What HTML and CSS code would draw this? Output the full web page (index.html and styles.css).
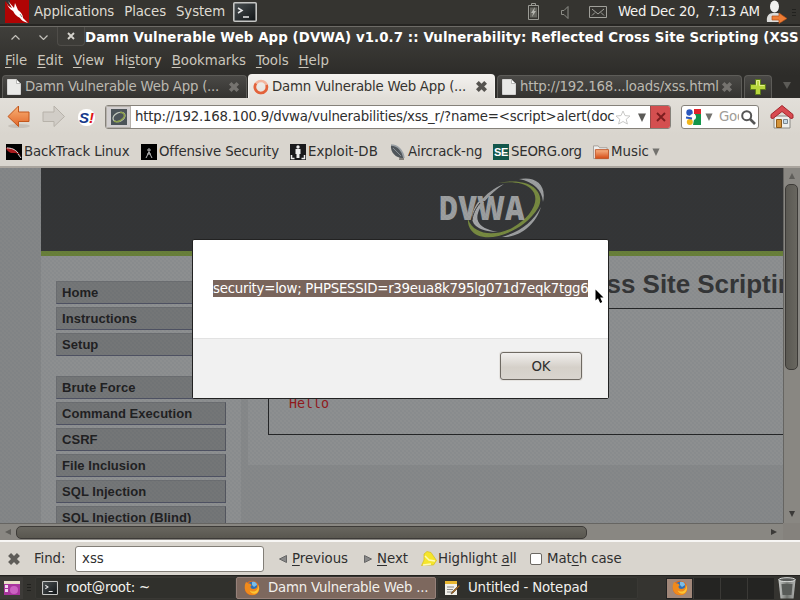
FILE: index.html
```
<!DOCTYPE html>
<html lang="en">
<head>
<meta charset="utf-8">
<title>Desktop</title>
<link rel="stylesheet" href="styles.css">
</head>
<body>
<svg class="defs" width="0" height="0">
  <defs>
    <linearGradient id="org" x1="0" y1="0" x2="0" y2="1"><stop offset="0" stop-color="#f9b377"/><stop offset="1" stop-color="#e2672a"/></linearGradient>
    <linearGradient id="screen" x1="0" y1="0" x2="1" y2="1"><stop offset="0" stop-color="#4c5254"/><stop offset="1" stop-color="#0f1315"/></linearGradient>
    <linearGradient id="fold" x1="0" y1="0" x2="0" y2="1"><stop offset="0" stop-color="#f7b384"/><stop offset="1" stop-color="#d44a14"/></linearGradient>
    <linearGradient id="steel" x1="0" y1="0" x2="1" y2="0"><stop offset="0" stop-color="#c8cac8"/><stop offset=".5" stop-color="#70736f"/><stop offset="1" stop-color="#b4b6b4"/></linearGradient>
    <symbol id="page" viewBox="0 0 14 16"><path d="M.5.5h9l4 4v11H.5z" fill="#e9e9e7" stroke="#fff" stroke-opacity=".6"/><path d="M9.5.5v4h4z" fill="#fff" stroke="#a8a8a6" stroke-width=".8"/></symbol>
    <symbol id="cross" viewBox="0 0 12 12"><path d="M2.2 2.2l7.6 7.6M9.8 2.2L2.2 9.8" stroke="currentColor" stroke-width="3.600"/></symbol>
    <symbol id="term" viewBox="0 0 24 20"><rect x=".8" y=".8" width="22.4" height="18.4" rx="1" fill="url(#screen)" stroke="#c5c6c4" stroke-width="1.6"/><path d="M5 6l4 2.5L5 11M10 15h6" fill="none" stroke="#e8e8e8" stroke-width="1.5"/></symbol>
    <symbol id="fox" viewBox="0 0 16 16"><circle cx="8" cy="8" r="7.3" fill="#e86a14"/><circle cx="8.4" cy="6.6" r="5.2" fill="#2f6fb5"/><path d="M8 2c3-1 5 1 5 3l-3 2-2-2z" fill="#79bde8"/><path d="M1 4.5L2 2l2.4 1.6C6 3.4 7 4 7.600 5.200L6.500 6.500c.2 2.500 2.500 3 5 2.100 1.500-.9 2-2.400 1.800-4.600C16 7 15.800 11 13 13.500c-4 3-9.500 1.500-11.400-2.500C.7 9 .6 6.500 1 4.500z" fill="#f08a1c"/><path d="M12 13.500c3-2 3.600-5.500 2.200-8.500.3 3-.7 5-2.700 6-2 1-4.500.6-5.800-.8.4 2.300 3.300 4 6.300 3.300z" fill="#fcc534"/></symbol>
  </defs>
</svg>

<header class="panel">
  <svg class="bt-logo" width="24" height="23" viewBox="0 0 24 23"><rect width="24" height="23" fill="#b00404"/><path d="M0 0h5v6L0 1z" fill="#333"/><path d="M1 1c1 4 3 6 6 7L3 1l6 7 1-5 3 7c3 2 5 5 5 8l5 5c-4-1-7-3-8-5-3-2-5-3-7-7C4 9 2 5 1 1z" fill="#fff"/><path d="M15 14l2 3" stroke="#888"/></svg>
  <nav class="panel-menu"><span>Applications</span><span>Places</span><span>System</span></nav>
  <svg class="panel-term" width="24" height="20"><use href="#term"/></svg>
  <svg class="battery" width="11" height="17" viewBox="0 0 11 17"><path d="M3.500 2.500v-2h4v2M.5 2.500h10v14H.5z" fill="none" stroke="#9a9a94"/><path d="M2 4.500h7v10H2z" fill="#65655f"/><path d="M7 4L3 10h2l-1 4 4-6H6z" fill="#b5b5af"/></svg>
  <svg class="sound" width="8" height="13" viewBox="0 0 8 13"><path d="M.5 4.500h2.500l4-4v12l-4-4H.5z" fill="none" stroke="#8d8d87"/></svg>
  <svg class="mail" width="18" height="12" viewBox="0 0 18 12"><path d="M.5.5h17v11H.5zM3 3l6 5 6-5M3 9.500l3-3M15 9.500l-3-3" fill="none" stroke="#a0a09a"/></svg>
  <span class="clock">Wed Dec 20,&nbsp; 7:13 AM</span>
  <svg class="user" width="22" height="24" viewBox="0 0 22 24"><path d="M1 22c-1-6 2-9 6-9h4c4 0 6 3 5 9z" fill="#dcdcda"/><ellipse cx="8.500" cy="6.500" rx="4.500" ry="6" fill="#f0f0ee"/><path d="M6 16h7v-3l8 5.500-8 5V20H6z" fill="#ee7d35" stroke="#b24c12" stroke-width=".7"/></svg>
  <svg class="grip" width="4" height="8" viewBox="0 0 4 8"><path d="M0 .5h4M0 3.500h4M0 6.500h4" stroke="#22221f"/></svg>
</header>

<div class="chrome">
  <div class="titlebar">
    <svg class="tb-up" width="9" height="5" viewBox="0 0 9 5"><path d="M.5 4.500l4-4 4 4" fill="none" stroke="#c3c1bb" stroke-width="1.200"/></svg>
    <svg class="tb-down" width="9" height="5" viewBox="0 0 9 5"><path d="M.5.5l4 4 4-4" fill="none" stroke="#c3c1bb" stroke-width="1.200"/></svg>
    <div class="tb-close"><svg width="8" height="8" viewBox="0 0 8 8"><path d="M1 1l6 6M7 1L1 7" stroke="#d5d3cd" stroke-width="1.900"/></svg></div>
    <h1>Damn Vulnerable Web App (DVWA) v1.0.7 :: Vulnerability: Reflected Cross Site Scripting (XSS</h1>
  </div>
  <nav class="menubar"><span><u>F</u>ile</span><span><u>E</u>dit</span><span><u>V</u>iew</span><span>Hi<u>s</u>tory</span><span><u>B</u>ookmarks</span><span><u>T</u>ools</span><span><u>H</u>elp</span></nav>
  <div class="tabs">
    <div class="tab tab-first"><svg width="14" height="16"><use href="#page"/></svg><span>Damn Vulnerable Web App (...</span><svg class="x" width="12" height="12"><use href="#cross"/></svg></div>
    <div class="tab tab-on"><svg width="16" height="16" viewBox="0 0 16 16"><circle cx="8" cy="8" r="6" fill="none" stroke="#f3b49c" stroke-width="2.600"/><path d="M3 4.500A6 6 0 1 0 13.500 6" fill="none" stroke="#e2623a" stroke-width="2.600"/></svg><span>Damn Vulnerable Web App (...</span><svg class="x" width="13" height="13"><use href="#cross"/></svg></div>
    <div class="tab tab-last"><svg width="14" height="16"><use href="#page"/></svg><span>http://192.168...loads/xss.html</span><svg class="x" width="12" height="12"><use href="#cross"/></svg></div>
    <div class="tab tab-new"><svg width="16" height="16" viewBox="0 0 16 16"><path d="M5.500.5h5v5h5v5h-5v5h-5v-5h-5v-5h5z" fill="#b9d63d" stroke="#5d7a1a"/><path d="M6.500 6.500v-5h3v5h5" fill="none" stroke="#e5f08c"/></svg></div>
    <svg class="tab-list" width="8" height="7" viewBox="0 0 8 7"><path d="M0 0h8L4 7z" fill="#5c5b57"/></svg>
  </div>
</div>

<div class="toolbar">
  <svg class="back" width="24" height="24" viewBox="0 0 24 24"><ellipse cx="12" cy="21" rx="11" ry="2" fill="#c6c1ba"/><path d="M1 11.500L11.500 1v6H22v9.500H11.500v5z" fill="url(#org)" stroke="#c2561c"/></svg>
  <svg class="fwd" width="24" height="24" viewBox="0 0 24 24"><path d="M22.500 11.500L12 1v6H1v9.500h11v5z" fill="#d1cdc7" stroke="#b7b2aa"/></svg>
  <div class="noscript"><i>S</i><b>!</b></div>
  <div class="urlbar">
    <div class="identity"><svg width="16" height="16" viewBox="0 0 16 16"><rect width="16" height="16" fill="#4c5459"/><ellipse cx="8" cy="8" rx="6.300" ry="4.300" fill="none" stroke="#c3c9be" stroke-width="1.200" transform="rotate(-25 8 8)"/><path d="M9 3.500c4-.5 6 3 3 6s-6 4-9 2.500" fill="none" stroke="#8ea24c" stroke-width="1.500"/></svg></div>
    <span class="url">http://192.168.100.9/dvwa/vulnerabilities/xss_r/?name=&lt;script&gt;alert(doc</span>
    <svg class="star" width="16" height="15" viewBox="0 0 16 15"><path d="M8 1l2 4.600 5 .4-3.800 3.300L12.400 14 8 11.500 3.600 14l1.200-4.700L1 6l5-.4z" fill="#fff" stroke="#c9c9c7"/></svg>
    <svg class="drop" width="8" height="9" viewBox="0 0 8 9"><path d="M0 .5h8L4 9z" fill="#5c5b58"/></svg>
    <div class="stop"><svg width="10" height="10" viewBox="0 0 10 10"><path d="M1 1l8 8M9 1L1 9" stroke="#7c1d1f" stroke-width="1.900"/></svg></div>
  </div>
  <div class="search">
    <svg width="16" height="16" viewBox="0 0 16 16"><path d="M9 0h7v5H9z" fill="#e0242c"/><path d="M10 5h6v11H8z" fill="#13964b"/><circle cx="4.500" cy="3.500" r="3.200" fill="#2a57bd"/><circle cx="8" cy="8" r="3" fill="#fff"/><circle cx="4.800" cy="13" r="3" fill="#f2b61b"/><path d="M1 8.500l6 1" stroke="#2a57bd" stroke-width="1.800"/></svg>
    <svg class="drop" width="8" height="8" viewBox="0 0 8 9"><path d="M0 .5h8L4 9z" fill="#73726e"/></svg>
    <span>Goo</span>
    <svg class="lens" width="15" height="15" viewBox="0 0 15 15"><circle cx="5.700" cy="5.700" r="4.500" fill="none" stroke="#555" stroke-width="2"/><path d="M9 9l5 5" stroke="#555" stroke-width="2.600"/></svg>
  </div>
  <svg class="home" width="24" height="24" viewBox="0 0 24 24"><path d="M4 11h16v12H4z" fill="#efefec" stroke="#8a8a86"/><path d="M6.500 14.500h5v8h-5z" fill="#d4943a" stroke="#8f5a18"/><path d="M13.500 14.500h4v4h-4z" fill="#c6d9e6" stroke="#7a8790"/><path d="M1 13V9.500L12 .5l11 9V13l-2 .5-9-7-9 7z" fill="#d84a50" stroke="#a3262d"/></svg>
</div>

<nav class="bookmarks">
  <span class="bm1"><svg width="16" height="16" viewBox="0 0 16 16"><path d="M0 0h16v16H0z"/><path d="M0 4c5-1 11 2 15 8-4-4-8-3-10-3C3 8 1 7 0 4z" fill="#a81b1e"/><path d="M1 4c4 0 8 1 11 5M12 10l3 4" stroke="#ddd" fill="none"/></svg>BackTrack Linux</span>
  <span class="bm2"><svg width="16" height="16" viewBox="0 0 16 16"><path d="M0 0h16v16H0z"/><path d="M8 4v5M6 6h4M8 8l-3 6M8 8l3 6M6 10h4" stroke="#bbb" fill="none"/></svg>Offensive Security</span>
  <span class="bm3"><svg width="16" height="16" viewBox="0 0 16 16"><path d="M0 0h16v16H0z" fill="#1a1a1c"/><circle cx="8" cy="3" r="1.700" fill="#eee"/><path d="M5.500 5h5v5h-1v4h-3v-4h-1z" fill="#eee"/><path d="M1.500 11v3.500h3M14.500 11v3.500h-3" stroke="#eee" fill="none" stroke-width="1.500"/></svg>Exploit-DB</span>
  <span class="bm4"><svg width="16" height="16" viewBox="0 0 16 16"><path d="M10 9l4 3v4H9z" fill="#85817b"/><path d="M1 1c7 0 12 6 13 13C7 15 0 9 1 1z" fill="#50565b"/><path d="M1 1c7 0 12 6 13 13" fill="none" stroke="#9aa0a5" stroke-width="1.500"/><path d="M3 4l8 8" stroke="#888e93"/></svg>Aircrack-ng</span>
  <span class="bm5"><b class="se">SE</b>SEORG.org</span>
  <span class="bm6"><svg width="16" height="16" viewBox="0 0 17 16"><path d="M.5 15V1.500h5l1.500 2h8V15z" fill="#eee" stroke="#a29d97"/><path d="M2.500 5.500h14v9.500h-14z" fill="url(#fold)" stroke="#c0582a"/></svg>Music<svg class="mdrop" width="8" height="8" viewBox="0 0 8 9"><path d="M0 .5h8L4 9z" fill="#73726e"/></svg></span>
</nav>

<main class="content">
  <div class="viewport">
    <div class="site">
      <div class="site-head">
        <svg class="dvwa" width="112" height="64" viewBox="0 0 112 64">
          <path d="M66 8C56 12 48 18 43 25h4C52 19 58 13 66 8z" fill="#9c9e9f"/>
          <path d="M60 7C95 0 108 18 100 32 88 52 62 63 46 61 34 60 29 50 30 43c6 17 28 17 44 9C95 40 104 22 92 12 86 7 75 5 60 7z" fill="#77893f"/>
          <path d="M103 31c-5 17-21 31-39 30 18-5 31-15 39-30zM81 3c16-3 28 5 24 23C104 14 96 6 81 3z" fill="#9c9e9f"/>
          <path d="M40 26c-12 18-6 29 20 30-22-4-26-14-14-30z" fill="#a4a6a7"/>
          <text class="dvwa-text" x=".5" y="43.500" textLength="86" lengthAdjust="spacingAndGlyphs">DVWA</text>
          <path d="M42 27c-5 6-7 11-8 17" fill="none" stroke="#343536"/>
        </svg>
      </div>
      <div class="site-body">
        <ul class="side">
          <li>Home</li><li>Instructions</li><li>Setup</li>
          <li class="gap">Brute Force</li><li>Command Execution</li><li>CSRF</li><li>File Inclusion</li><li>SQL Injection</li><li>SQL Injection (Blind)</li>
        </ul>
        <section class="main">
          <h2>Vulnerability: Reflected Cross Site Scripting (XSS)</h2>
          <div class="box"><pre>Hello</pre></div>
        </section>
      </div>
    </div>
  </div>
  <div class="vscroll"><svg width="6" height="6" viewBox="0 0 6 6"><path d="M0 6h6L3 0z" fill="#5f5e5a"/></svg><div class="vthumb"></div><svg class="vs-down" width="6" height="6" viewBox="0 0 6 6"><path d="M0 0h6L3 6z" fill="#3b3a38"/></svg></div>
  <div class="hscroll"><svg width="6" height="6" viewBox="0 0 6 6"><path d="M6 0v6L0 3z" fill="#5f5e5a"/></svg><div class="hthumb"></div><svg class="hs-right" width="6" height="6" viewBox="0 0 6 6"><path d="M0 0v6l6-3z" fill="#3b3a38"/></svg></div>
  <div class="corner"></div>
  <div class="dialog">
    <div class="msg"><span>security=low; PHPSESSID=r39eua8k795lg071d7eqk7tgg6</span></div>
    <div class="actions"><button>OK</button></div>
  </div>
  <svg class="cursor" width="10" height="17" viewBox="0 0 10 17"><path d="M.5.5v11l2.500-2.200 2.200 4.700 2-1-2-4.500h3.300z" fill="#000"/></svg>
</main>

<div class="findbar">
  <svg class="fx" width="14" height="14"><use href="#cross"/></svg>
  <label>Find:</label>
  <div class="find-in">xss</div>
  <svg class="prev-i" width="8" height="8" viewBox="0 0 8 8"><path d="M7.500.5v7L.5 4z" fill="#888" stroke="#666"/></svg>
  <span class="prev"><u>P</u>revious</span>
  <svg class="next-i" width="8" height="8" viewBox="0 0 8 8"><path d="M.5.5v7l7-3.500z" fill="#888" stroke="#666"/></svg>
  <span class="next"><u>N</u>ext</span>
  <svg class="hl-i" width="16" height="16" viewBox="0 0 16 16"><path d="M3 3l3-2.500 4 1 5.500 8-3 4.500H3l-2.500.5L3 9z" fill="#f5e52c" stroke="#d5bd1c" stroke-width=".7"/><path d="M4 5l4 4 6 1M2 14l8-1" stroke="#fffbb0" fill="none" stroke-width="1.500"/></svg>
  <span class="hl">Highlight <u>a</u>ll</span>
  <div class="check"></div>
  <span class="mc">Mat<u>c</u>h case</span>
</div>

<footer class="taskbar">
  <div class="show"><svg width="16" height="14" viewBox="0 0 16 14"><path d="M0 0h16v14H0z" fill="#a9359e"/><path d="M0 0h16v3H0z" fill="#e8dfc9"/><path d="M1 4h3v3H1zM1 8h3v3H1z" fill="#f0d8ee"/><circle cx="10" cy="9" r="4" fill="#cc62c2"/></svg></div>
  <svg class="grip2" width="4" height="8" viewBox="0 0 4 8"><path d="M0 .5h4M0 3.500h4M0 6.500h4" stroke="#20201d"/></svg>
  <div class="task t1"><svg width="16" height="14" viewBox="0 0 24 20" preserveAspectRatio="none"><use href="#term" width="24" height="20"/></svg><span>root@root: ~</span></div>
  <div class="task t2"><svg width="16" height="16"><use href="#fox"/></svg><span>Damn Vulnerable Web ...</span></div>
  <div class="task t3"><svg width="16" height="16" viewBox="0 0 16 16"><path d="M1 2h12v13H1z" fill="#f1f0ea"/><path d="M1 1h12v3H1z" fill="#e8b731"/><path d="M3 7h7M3 9.500h6M3 12h5" stroke="#888"/><path d="M15 5l-7 7-1 2 2-1 7-7z" fill="#a56a25" stroke="#442a10" stroke-width=".5"/></svg><span>Untitled - Notepad</span></div>
  <div class="pager"><div class="desk on"><svg width="16" height="16"><use href="#fox"/></svg></div><div class="desk"></div><div class="desk"></div><div class="desk"></div></div>
  <svg class="trash" width="18" height="22" viewBox="0 0 18 22"><path d="M.5 3h17l-2 18.500h-13z" fill="url(#steel)"/><path d="M3.500 7h11l-1 11h-9z" fill="#585b58"/><ellipse cx="9" cy="2.700" rx="8.300" ry="2" fill="#5a5c5a" stroke="#dcdedc"/></svg>
</footer>
</body>
</html>
```

FILE: styles.css
```
* { box-sizing: border-box; }
body {
  margin: 0; width: 800px; height: 600px; overflow: hidden;
  font-family: "DejaVu Sans", sans-serif; font-size: 13.33px; line-height: 16px;
  color: #2f2f2f; background: #3c3b37;
}
span, h1, h2, label { white-space: nowrap; }
svg { display: block; flex: none; }
.defs { position: absolute; }
u { text-underline-offset: 2px; text-decoration-thickness: 1px; }

.panel { height: 26px; display: flex; align-items: flex-start; background: #353430; border-bottom: 2px solid #262522; color: #dfdbd2; }
.bt-logo { margin-left: 5px; }
.panel-menu { display: flex; margin: 4px 0 0 5px; letter-spacing: -.1px; }
.panel-menu span { margin-right: 10px; }
.panel-term { margin: 2px 0 0 -2px; }
.battery { margin: 3px 0 0 auto; }
.sound { margin: 6px 0 0 22px; }
.mail { margin: 6px 0 0 20px; }
.clock { margin: 4px 0 0 11px; width: 142px; color: #f4f2ee; letter-spacing: -.3px; }
.user { margin-left: 6px; }
.grip { margin: 9px 4px 0 4px; }

.chrome { height: 72px; background: linear-gradient(#403f3b, #2d2c29 48px); border-top: 1px solid #6d6b66; }
.titlebar { height: 21px; display: flex; align-items: center; overflow: hidden; }
.tb-up { margin-left: 11px; }
.tb-down { margin-left: 19px; }
.tb-close { margin: 0 0 2px 9px; width: 28px; height: 19px; display: flex; align-items: center; justify-content: center; border: 1px solid #4f4d49; border-top: 0; border-radius: 0 0 4px 4px; background: #3d3c38; }
.titlebar h1 { margin: 0; font-size: 13.33px; font-weight: bold; color: #fff; line-height: 16px; letter-spacing: .095px; }
.menubar { height: 26px; display: flex; align-items: center; padding-left: 5px; color: #cbc7bd; letter-spacing: -.03px; }
.menubar span { margin-right: 10px; }
.tabs { height: 24px; display: flex; align-items: flex-end; }
.tab { height: 23px; display: flex; align-items: center; border-radius: 4px 4px 0 0; border: 1px solid #5d5c58; border-bottom: 0; background: linear-gradient(#4a4946, #343330); color: #bcb9b1; letter-spacing: -.24px; }
.tab span { flex: 1; }
.tab .x { color: #75736f; }
.tab-first { margin-left: 2px; width: 245px; padding: 0 6px 0 4px; }
.tab-first span { margin-left: 4px; }
.tab-on { margin-left: 1px; width: 247px; height: 24px; padding: 0 6px 0 4px; background: linear-gradient(#f3f1ee, #e2dfd9); border-color: #f4f2ee; color: #36342f; }
.tab-on span { margin-left: 3px; }
.tab-on .x { color: #55534f; }
.tab-last { margin-left: 2px; width: 245px; padding: 0 8px 0 4px; letter-spacing: -.2px; }
.tab-last span { margin-left: 4px; }
.tab-new { margin-left: 2px; width: 28px; justify-content: center; }
.tab-list { margin: 0 0 9px 11px; }

.toolbar { height: 37px; padding-top: 1px; display: flex; align-items: center; background: linear-gradient(#e2dfd9, #d9d5ce); }
.back { margin-left: 7px; }
.fwd { margin-left: 11px; }
.noscript { margin-left: 12px; width: 17px; height: 17px; border-radius: 8px; background: #fff; font: bold 15px/17px "Liberation Sans", sans-serif; color: #173a8c; display: flex; justify-content: center; }
.noscript b { color: #e01414; font-style: italic; }
.urlbar { margin-left: 10px; width: 566px; height: 24px; display: flex; align-items: center; background: #fff; border: 1px solid #85817a; border-radius: 3px; overflow: hidden; }
.identity { width: 25px; height: 22px; display: flex; align-items: center; justify-content: center; background: #d2cfd0; border: 1px solid #b5b1ab; }
.url { width: 478px; margin-left: 4px; letter-spacing: -.22px; }
.star { margin-left: 2px; }
.urlbar .drop { margin-left: 7px; }
.stop { margin-left: auto; align-self: stretch; width: 20px; display: flex; align-items: center; justify-content: center; background: #d44f50; border-left: 1px solid #9c4a49; }
.search { margin-left: 10px; width: 78px; height: 24px; display: flex; align-items: center; background: #fff; border: 1px solid #85817a; border-radius: 3px; padding-left: 3px; }
.search .drop { margin-left: 4px; }
.search span { margin-left: 6px; width: 20px; overflow: hidden; color: #a09d98; letter-spacing: -.3px; }
.lens { margin-left: 2px; }
.home { margin-left: 11px; }

.bookmarks { height: 33px; display: flex; align-items: center; background: #d9d5ce; border-bottom: 2px solid #aaa59e; padding: 2px 0 0 6px; letter-spacing: -.13px; }
.bookmarks span { display: flex; align-items: center; gap: 2px; }
.bm1 { width: 135px; }
.bm2 { width: 149px; }
.bm3 { width: 100px; letter-spacing: 0; }
.bm4 { width: 103px; }
.bm5 { width: 100px; letter-spacing: -.25px; }
.bm6 { letter-spacing: 0; }
.se { width: 16px; height: 16px; background: #12564a; color: #fff; font: bold 11px/17px "Liberation Sans", sans-serif; text-align: center; }
.mdrop { margin-left: 1px; }

.content { position: relative; height: 372px; display: grid; grid-template: 355px 17px / 783px 17px; background: #8a8a87; }
.viewport { overflow: hidden; background: #848687; position: relative; }
.viewport::after { content: ""; position: absolute; inset: 0; background: repeating-conic-gradient(rgba(40,60,80,.04) 0 25%, transparent 0 50%) 0 0 / 4px 4px; }
.site { margin-left: 41px; height: 355px; background: #868889; }
.site-head { height: 88px; background: #343536; border-bottom: 5px solid #687f38; }
.dvwa { margin-left: 397px; transform: translateY(8px); }
.dvwa-text { font: 800 33px "Open Sans", sans-serif; fill: #9c9e9f; }
.site-body { display: flex; }
.side { margin: 0; padding: 25px 15px 0; width: 200px; height: 267px; list-style: none; background: #8d8f90; overflow: hidden; flex: none; }
.side li { height: 23px; margin-bottom: 3px; padding-left: 5px; border: 1px solid #6b6d70; border-right-color: #53555e; border-bottom-color: #4e5162; background: #747677; font: bold 13px/21px "Liberation Sans", sans-serif; letter-spacing: .05px; color: #1f2021; }
.side .gap { margin-top: 20px; }
.main { margin-left: 7px; width: 600px; height: 209px; padding: 13px 20px 0; background: #8d8f90; flex: none; }
.main h2 { margin: 0; height: 39px; font: bold 26px/30px "Liberation Sans", sans-serif; letter-spacing: -.05px; color: #343536; }
.box { height: 127px; width: 620px; border: 1px solid #242526; padding: 87px 0 0 20px; }
.box pre { margin: 0; font: 13.33px/16px "DejaVu Sans Mono", monospace; color: #92191b; }

.vscroll { border-left: 1px solid #666562; background: #898782; display: flex; flex-direction: column; align-items: center; padding: 5px 1px 0 0; }
.vthumb { width: 13px; height: 186px; margin-top: 5px; border: 1px solid #3d3b38; border-radius: 5px; background: linear-gradient(90deg, #5b5953, #68665f); }
.vs-down { margin: auto 0 6px; }
.hscroll { border-top: 1px solid #666562; background: #898782; display: flex; align-items: center; padding-left: 5px; }
.hthumb { height: 13px; width: 571px; margin-left: 5px; border: 1px solid #3d3b38; border-radius: 5px; background: linear-gradient(#68665f, #59574f); }
.hs-right { margin: 0 6px 0 auto; }
.corner { background: #85827d; }

.dialog { position: absolute; left: 192px; top: 71px; width: 417px; height: 160px; border: 1px solid #222; border-radius: 2px; background: #fff; }
.msg { height: 98px; padding: 40px 0 0 20px; }
.msg span { display: block; width: 375px; height: 17px; line-height: 17px; background: #79655c; color: #fff; letter-spacing: -.25px; }
.actions { height: 60px; background: #f1f1f1; border-top: 1px solid #e2e2e2; display: flex; justify-content: flex-end; padding: 13px 26px 0 0; }
.actions button { width: 82px; height: 28px; padding: 1px 0 0; border: 1px solid #6f6a63; border-radius: 3px; background: linear-gradient(#f1efed, #d5d0c9 55%, #d9d5cf); font: inherit; color: #2f2f2f; box-shadow: 0 0 0 1px #e4e2df; }
.cursor { position: absolute; left: 595px; top: 121px; }

.findbar { height: 35px; display: flex; align-items: center; background: #d9d5ce; border-top: 2px solid #f7f6f4; }
.fx { margin-left: 7px; color: #5f5d59; }
.findbar label { margin-left: 13px; width: 41px; letter-spacing: -.1px; }
.find-in { width: 189px; height: 26px; background: #fff; border: 1px solid #827e77; border-radius: 3px; padding-left: 6px; line-height: 24px; }
.prev-i { margin-left: 15px; }
.prev { margin-left: 5px; width: 57px; letter-spacing: -.05px; }
.next-i { margin-left: 15px; }
.next { margin-left: 5px; width: 32px; }
.hl-i { margin-left: 12px; }
.hl { margin-left: 1px; width: 79px; letter-spacing: -.1px; }
.check { margin-left: 13px; width: 12px; height: 12px; border: 1px solid #6b6863; border-radius: 2px; background: #fff; }
.mc { margin-left: 5px; letter-spacing: -.1px; }

.taskbar { height: 25px; display: flex; align-items: center; background: #353430; border-top: 1px solid #23221f; color: #f2f0ec; }
.show { width: 23px; height: 22px; display: flex; align-items: center; justify-content: center; background: #3d3b38; }
.grip2 { margin: 0 4px 0 4px; }
.task { height: 22px; display: flex; align-items: center; padding-left: 7px; gap: 7px; background: #30302c; border: 1px solid #393834; border-radius: 2px; letter-spacing: -.22px; }
.t1 { width: 201px; padding-left: 6px; gap: 8px; }
.t2 { width: 200px; gap: 8px; background: #7d685e; border-color: #96817a; }
.t3 { width: 201px; margin-left: 1px; padding-left: 6px; gap: 8px; letter-spacing: -.16px; }
.pager { margin-left: 28px; display: flex; height: 21px; gap: 1px; background: #3a3936; }
.desk { width: 26px; background: #242422; }
.desk.on { width: 27px; display: flex; align-items: center; justify-content: center; background: #a18779; border: 1px solid #222; }
.trash { margin-left: 4px; }
```
